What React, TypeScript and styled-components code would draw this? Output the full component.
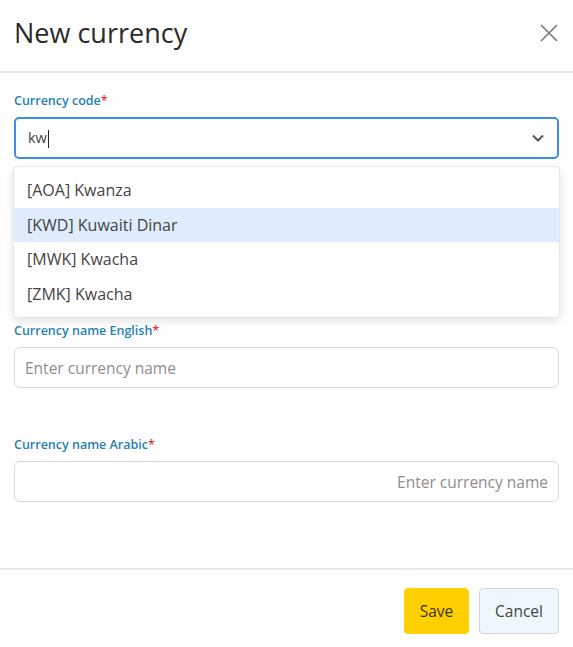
import React from "react";
import styled, { createGlobalStyle } from "styled-components";

const Global = createGlobalStyle`
  html, body { margin: 0; padding: 0; background: #fff; }
  body { font-family: "Open Sans", "Noto Sans", sans-serif; color: #333; }
  * { box-sizing: border-box; }
`;

const Modal = styled.div`
  width: 573px;
  height: 647px;
  display: flex;
  flex-direction: column;
  background: #fff;
`;

const Header = styled.div`
  height: 73px;
  display: flex;
  align-items: center;
  justify-content: space-between;
  padding: 0 14px 6px 14px;
  border-bottom: 2px solid #e6e9ee;
`;

const Title = styled.h1`
  margin: 0;
  font-size: 27px;
  font-weight: 500;
  color: #2b2b2b;
`;

const CloseButton = styled.button`
  border: none;
  background: none;
  padding: 0;
  width: 20px;
  height: 20px;
  display: flex;
  align-items: center;
  justify-content: center;
  cursor: pointer;
`;

const Body = styled.div`
  flex: 1;
  padding: 20px 14px 0 14px;
  display: flex;
  flex-direction: column;
`;

const Field = styled.div<{ $top?: number }>`
  display: flex;
  flex-direction: column;
  margin-top: ${(p) => p.$top ?? 0}px;
  position: relative;
`;

const Label = styled.label`
  font-size: 12.5px;
  font-weight: 600;
  color: #2680b3;
  margin-bottom: 8px;
  line-height: 16px;
`;

const Star = styled.span`
  color: #e53935;
`;

const SelectBox = styled.div`
  height: 42px;
  border: 2px solid #3b8cf0;
  border-radius: 5px;
  display: flex;
  align-items: center;
  justify-content: space-between;
  padding: 0 12px 0 12px;
  font-size: 14.5px;
  color: #444;
`;

const Caret = styled.span`
  display: inline-block;
  width: 1px;
  height: 18px;
  background: #222;
  margin-left: 1px;
  vertical-align: middle;
`;

const Menu = styled.ul`
  position: absolute;
  top: 73px;
  left: -1px;
  right: -1px;
  margin: 0;
  padding: 6px 0;
  list-style: none;
  background: #fff;
  border: 1px solid #e4e6ea;
  border-radius: 5px;
  box-shadow: 0 3px 8px rgba(0, 0, 0, 0.12);
  z-index: 2;
`;

const Option = styled.li<{ $active?: boolean }>`
  height: 34.5px;
  display: flex;
  align-items: center;
  padding: 0 13px;
  font-size: 16px;
  color: #444;
  background: ${(p) => (p.$active ? "#dfecfb" : "transparent")};
`;

const TextInput = styled.input<{ $rtl?: boolean }>`
  height: 41px;
  width: 100%;
  border: 1px solid #d5d8dd;
  border-radius: 6px;
  padding: 0 10px;
  font-family: inherit;
  font-size: 15.5px;
  color: #444;
  outline: none;
  text-align: ${(p) => (p.$rtl ? "right" : "left")};
  &::placeholder { color: #8e8e8e; }
`;

const Footer = styled.div`
  height: 79px;
  border-top: 2px solid #e6e9ee;
  display: flex;
  align-items: flex-start;
  justify-content: flex-end;
  gap: 10px;
  padding: 18px 14px 0 0;
`;

const Button = styled.button<{ $primary?: boolean }>`
  height: 46px;
  width: ${(p) => (p.$primary ? 65 : 80)}px;
  padding: 0;
  border-radius: 4px;
  font-family: inherit;
  font-size: 15.5px;
  color: ${(p) => (p.$primary ? "#3a3306" : "#444")};
  background: ${(p) => (p.$primary ? "#ffd000" : "#eff7fd")};
  border: ${(p) => (p.$primary ? "1px solid #ffd000" : "1px solid #cfd6de")};
  cursor: pointer;
`;

const options = [
  "[AOA] Kwanza",
  "[KWD] Kuwaiti Dinar",
  "[MWK] Kwacha",
  "[ZMK] Kwacha",
];

export default function App() {
  return (
    <>
      <Global />
      <Modal>
        <Header>
          <Title>New currency</Title>
          <CloseButton aria-label="close">
            <svg width="18" height="18" viewBox="0 0 18 18">
              <path d="M1 1L17 17M17 1L1 17" stroke="#777" strokeWidth="1.6" />
            </svg>
          </CloseButton>
        </Header>
        <Body>
          <Field>
            <Label>
              Currency code<Star>*</Star>
            </Label>
            <SelectBox>
              <span>
                kw<Caret />
              </span>
              <svg width="14" height="10" viewBox="0 0 14 10">
                <path d="M2 2.5L7 7.5L12 2.5" fill="none" stroke="#555" strokeWidth="2" />
              </svg>
            </SelectBox>
            <Menu>
              {options.map((o, i) => (
                <Option key={o} $active={i === 1}>
                  {o}
                </Option>
              ))}
            </Menu>
          </Field>
          <Field $top={164}>
            <Label>
              Currency name English<Star>*</Star>
            </Label>
            <TextInput placeholder="Enter currency name" />
          </Field>
          <Field $top={49}>
            <Label>
              Currency name Arabic<Star>*</Star>
            </Label>
            <TextInput $rtl placeholder="Enter currency name" />
          </Field>
        </Body>
        <Footer>
          <Button $primary>Save</Button>
          <Button>Cancel</Button>
        </Footer>
      </Modal>
    </>
  );
}
